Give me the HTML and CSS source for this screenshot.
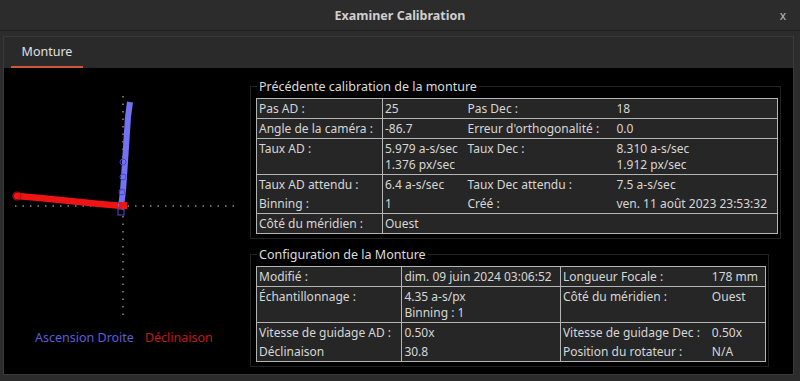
FILE: index.html
```html
<!DOCTYPE html>
<html lang="fr">
<head>
  <meta charset="UTF-8" />
  <title>Examiner Calibration</title>
  <link rel="stylesheet" href="styles.css">
</head>
<body>
  <div class="titlebar">
    <span class="title">Examiner Calibration</span>
    <span class="close">x</span>
  </div>

  <div class="tabwidget">
    <div class="tabbar">
      <div class="tab active">Monture</div>
    </div>

    <div class="pane">
      <div class="plot">
        <svg class="chart" width="241" height="258" viewBox="4 69 241 258">
          <line x1="15" y1="207" x2="236" y2="207" stroke="#8a8a8a" stroke-width="1.5" stroke-dasharray="1.5 6" />
          <line x1="123" y1="97" x2="123" y2="318" stroke="#8a8a8a" stroke-width="1.5" stroke-dasharray="1.5 6" />
          <polyline points="17,197 40,199 60,201 80,203 100,205 123,207" fill="none" stroke="#ee1414" stroke-width="6.5" stroke-linecap="round" />
          <circle cx="17" cy="197" r="4" fill="none" stroke="#b01010" stroke-width="1.2" />
          <polyline points="121,208 123,192 124,178 125,163 126,148 127,133 128,118 130,103" fill="none" stroke="#7272f2" stroke-width="6" />
          <circle cx="123" cy="163" r="3" fill="none" stroke="#4848c8" stroke-width="1" />
          <circle cx="123" cy="178" r="3" fill="none" stroke="#4848c8" stroke-width="1" />
          <circle cx="122" cy="193" r="3" fill="none" stroke="#4848c8" stroke-width="1" />
          <rect x="118" y="210" width="6" height="6" fill="none" stroke="#5050d0" stroke-width="1" />
          <rect x="119" y="203" width="8" height="7" fill="#ee1414" />
        </svg>
        <div class="legend">
          <span class="ra">Ascension Droite</span>
          <span class="dec">Déclinaison</span>
        </div>
      </div>

      <div class="details">
        <fieldset class="group g1">
          <legend>Précédente calibration de la monture</legend>
          <table class="info t1">
            <colgroup>
              <col style="width:126px"><col style="width:83px"><col style="width:149px"><col style="width:163px">
            </colgroup>
            <tr><td class="sep">Pas AD :</td><td>25</td><td>Pas Dec :</td><td>18</td></tr>
            <tr><td class="sep">Angle de la caméra :</td><td>-86.7</td><td>Erreur d'orthogonalité :</td><td>0.0</td></tr>
            <tr><td class="sep">Taux AD :</td><td>5.979 a-s/sec<br>1.376 px/sec</td><td>Taux Dec :</td><td>8.310 a-s/sec<br>1.912 px/sec</td></tr>
            <tr class="joined"><td class="sep">Taux AD attendu :</td><td>6.4 a-s/sec</td><td>Taux Dec attendu :</td><td>7.5 a-s/sec</td></tr>
            <tr><td class="sep">Binning :</td><td>1</td><td>Créé :</td><td>ven. 11 août 2023 23:53:32</td></tr>
            <tr><td class="sep">Côté du méridien :</td><td>Ouest</td><td></td><td></td></tr>
          </table>
        </fieldset>

        <fieldset class="group g2">
          <legend>Configuration de la Monture</legend>
          <table class="info t2">
            <colgroup>
              <col style="width:146px"><col style="width:159px"><col style="width:150px"><col style="width:56px">
            </colgroup>
            <tr><td class="sep">Modifié :</td><td class="sep">dim. 09 juin 2024 03:06:52</td><td>Longueur Focale :</td><td>178 mm</td></tr>
            <tr><td class="sep">Échantillonnage :</td><td class="sep">4.35 a-s/px<br>Binning : 1</td><td>Côté du méridien :</td><td>Ouest</td></tr>
            <tr class="joined"><td class="sep">Vitesse de guidage AD :</td><td class="sep">0.50x</td><td>Vitesse de guidage Dec :</td><td>0.50x</td></tr>
            <tr><td class="sep">Déclinaison</td><td class="sep">30.8</td><td>Position du rotateur :</td><td>N/A</td></tr>
          </table>
        </fieldset>
      </div>
    </div>
  </div>
</body>
</html>
```

FILE: styles.css
```css
* {
  margin: 0;
  padding: 0;
  box-sizing: border-box;
}
body {
  width: 800px;
  height: 381px;
  background: #2c2c2c;
  font-family: 'Noto Sans', sans-serif;
  font-size: 12px;
  color: #d6d6d6;
  overflow: hidden;
}
.titlebar {
  height: 31px;
  display: flex;
  align-items: center;
  justify-content: center;
  position: relative;
  border-bottom: 1px solid #1f1f1f;
}
.title {
  font-weight: bold;
  font-size: 12.5px;
  color: #cfcfcf;
}
.close {
  position: absolute;
  right: 14px;
  top: 7px;
  font-size: 12px;
  color: #bdbdbd;
}
.tabwidget {
  margin: 5px 6px 0 3px;
  border: 1px solid #3a3a3a;
  background: #2a2a2a;
}
.tabbar {
  height: 31px;
  display: flex;
  padding-left: 7px;
}
.tab {
  width: 72px;
  text-align: center;
  line-height: 29px;
  font-size: 12.5px;
  color: #e0e0e0;
}
.tab.active {
  border-bottom: 2px solid #d2553b;
}
.pane {
  height: 306px;
  background: #000;
  display: flex;
}
.plot {
  width: 241px;
  display: flex;
  flex-direction: column;
}
.chart {
  display: block;
}
.legend {
  display: flex;
  gap: 11px;
  padding-left: 31px;
  line-height: 24px;
  font-size: 12.5px;
}
.legend .ra {
  color: #5c5cdc;
}
.legend .dec {
  color: #c41818;
}
.details {
  padding: 10px 0 0 5px;
  display: flex;
  flex-direction: column;
  gap: 7px;
}
.group {
  border: 1px solid #222;
  padding: 3px 2px 4px 5px;
  min-width: 0;
}
.group legend {
  margin-left: 1px;
  padding: 0 2px;
  font-size: 12.5px;
  color: #dcdcdc;
}
.g1 {
  width: 531px;
}
.g2 {
  width: 519px;
}
.info {
  border-collapse: collapse;
  table-layout: fixed;
  background: #262626;
  border: 1px solid #b4b4b4;
}
.info td {
  vertical-align: top;
  padding: 2px 2px 1px;
  line-height: 16px;
  border-bottom: 1px solid #b4b4b4;
  white-space: nowrap;
  overflow: hidden;
}
.info tr.joined td {
  border-bottom: none;
}
.info td.sep {
  border-right: 1px solid #b4b4b4;
}
```
